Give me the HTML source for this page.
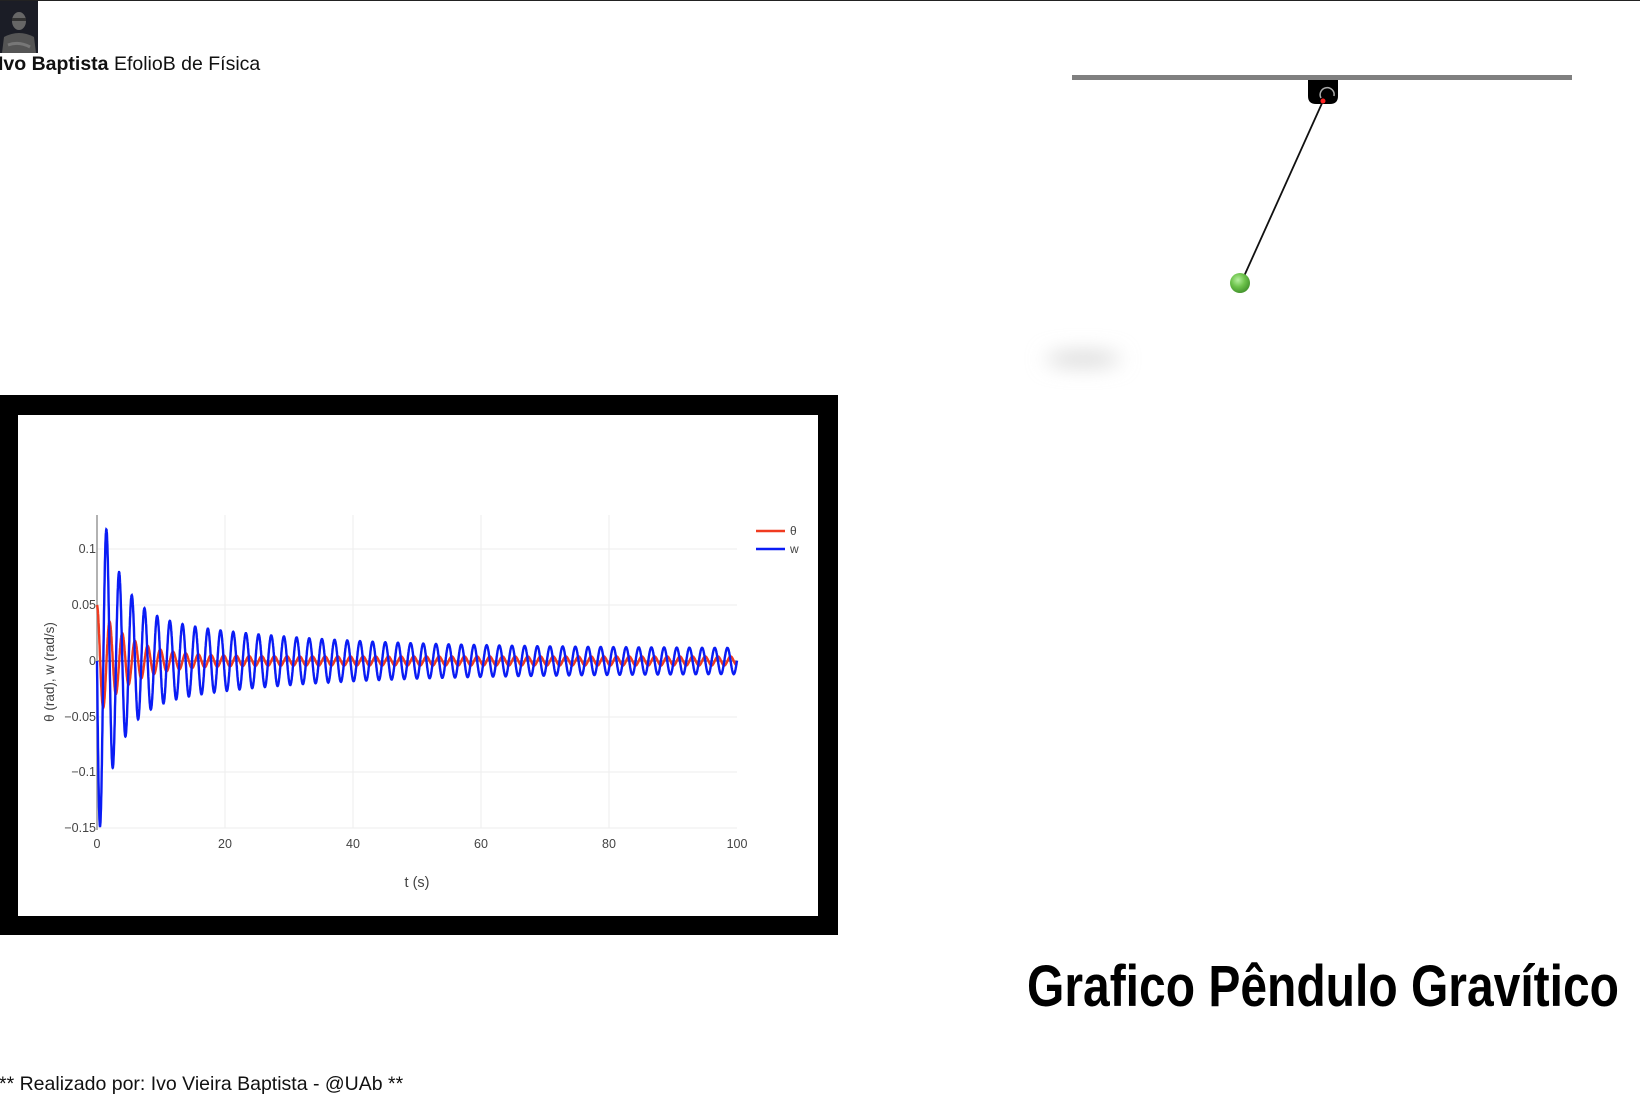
<!DOCTYPE html>
<html><head><meta charset="utf-8">
<style>
html,body{margin:0;padding:0;background:#fff;width:1640px;height:1108px;overflow:hidden;position:relative;font-family:"Liberation Sans",Arial,sans-serif;}
.top{position:absolute;left:0;top:0;width:1640px;height:1px;background:#222;}
.av{position:absolute;left:0;top:1px;width:38px;height:52px;background:#1b1d26;overflow:hidden;}
.hd{position:absolute;left:-2px;top:53px;font-size:19.5px;color:#111;white-space:nowrap;}
.ft{position:absolute;left:-1px;top:1073px;font-size:19.5px;color:#111;white-space:nowrap;}
</style></head><body>
<div class="top"></div>
<div class="av"><svg width="38" height="52"><ellipse cx="19" cy="20" rx="7" ry="9" fill="#666"/><rect x="12" y="17" width="14" height="3" fill="#333"/><path d="M2 52 L4 36 Q19 28 34 36 L36 52 Z" fill="#555"/><path d="M8 44 Q19 40 30 46" stroke="#777" stroke-width="3" fill="none"/></svg></div>
<div class="hd"><b>Ivo Baptista</b> EfolioB de Física</div>

<svg style="position:absolute;left:0;top:0" width="1640" height="1108">
<defs>
<radialGradient id="g" cx="0.4" cy="0.35" r="0.7"><stop offset="0" stop-color="#b6f0a0"/><stop offset="0.5" stop-color="#6cc24a"/><stop offset="1" stop-color="#3f8f2a"/></radialGradient>
<filter id="b" x="-1" y="-3" width="3" height="7"><feGaussianBlur stdDeviation="10"/></filter>
</defs>
<ellipse cx="1083" cy="359" rx="38" ry="7" fill="#d4d4d4" filter="url(#b)"/>
<rect x="1072" y="75" width="500" height="5" fill="#808080"/>
<path d="M1308 80 H1338 V96 Q1338 104 1330 104 H1316 Q1308 104 1308 96 Z" fill="#000"/>
<path d="M1321 98 A7 7 0 1 1 1334 96" stroke="#aaa" stroke-width="1.5" fill="none"/>
<line x1="1323" y1="101" x2="1241" y2="283" stroke="#111" stroke-width="1.8"/>
<circle cx="1323" cy="101" r="2.5" fill="#f22"/>
<circle cx="1240" cy="283" r="10" fill="url(#g)"/>
<text x="1027" y="1006" font-family="Liberation Sans,Arial,sans-serif" font-weight="bold" font-size="58" textLength="592" lengthAdjust="spacingAndGlyphs" fill="#000">Grafico Pêndulo Gravítico</text>

<rect x="0" y="395" width="838" height="540" fill="#000"/>
<rect x="18" y="415" width="800" height="501" fill="#fff"/>
<g stroke="#eee" stroke-width="1">
<line x1="225" y1="515" x2="225" y2="828"/><line x1="353" y1="515" x2="353" y2="828"/><line x1="481" y1="515" x2="481" y2="828"/><line x1="609" y1="515" x2="609" y2="828"/>
<line x1="97" y1="549" x2="737" y2="549"/><line x1="97" y1="605" x2="737" y2="605"/><line x1="97" y1="717" x2="737" y2="717"/><line x1="97" y1="772" x2="737" y2="772"/><line x1="97" y1="828" x2="737" y2="828"/>
</g>
<line x1="97" y1="661" x2="737" y2="661" stroke="#444" stroke-width="1"/>
<line x1="97" y1="515" x2="97" y2="830" stroke="#999" stroke-width="1.5"/>
<path id="th" fill="none" stroke="#f03b20" stroke-width="2.4"/>
<path id="w" fill="none" stroke="#0a1cf5" stroke-width="2.4"/>
<g font-family="Liberation Sans,Arial,sans-serif" font-size="12.5" fill="#444" text-anchor="end">
<text x="96" y="553">0.1</text><text x="96" y="609">0.05</text><text x="96" y="665">0</text><text x="96" y="721">−0.05</text><text x="96" y="776">−0.1</text><text x="96" y="832">−0.15</text>
</g>
<g font-family="Liberation Sans,Arial,sans-serif" font-size="12.5" fill="#444" text-anchor="middle">
<text x="97" y="848">0</text><text x="225" y="848">20</text><text x="353" y="848">40</text><text x="481" y="848">60</text><text x="609" y="848">80</text><text x="737" y="848">100</text>
<text x="417" y="887" font-size="14.5">t (s)</text>
<text transform="translate(54,672) rotate(-90)" font-size="13.5">θ (rad), w (rad/s)</text>
</g>
<line x1="756" y1="531" x2="785" y2="531" stroke="#f03b20" stroke-width="2.4"/>
<line x1="756" y1="549" x2="785" y2="549" stroke="#0a1cf5" stroke-width="2.4"/>
<text x="790" y="535" font-family="Liberation Sans,Arial,sans-serif" font-size="12" fill="#444">θ</text>
<text x="790" y="553" font-family="Liberation Sans,Arial,sans-serif" font-size="12" fill="#444">w</text>
</svg>
<div class="ft">** Realizado por: Ivo Vieira Baptista - @UAb **</div>
<script>
var T=1.98,om=2*Math.PI/T,dt=[],dw=[];
for(var i=0;i<=5000;i++){var t=i*0.02;
var aw=0.011+0.035*Math.exp(-t/25)+0.12*Math.exp(-t/3);
var at=0.004+0.046*Math.exp(-t/5);
var th=at*Math.cos(om*t), w=-aw*Math.sin(om*t);
var x=(97+t*6.4).toFixed(1);
dt.push((i?'L':'M')+x+' '+(661-th*1120).toFixed(1));
dw.push((i?'L':'M')+x+' '+(661-w*1120).toFixed(1));}
document.getElementById('th').setAttribute('d',dt.join(''));
document.getElementById('w').setAttribute('d',dw.join(''));
</script>
</body></html>
